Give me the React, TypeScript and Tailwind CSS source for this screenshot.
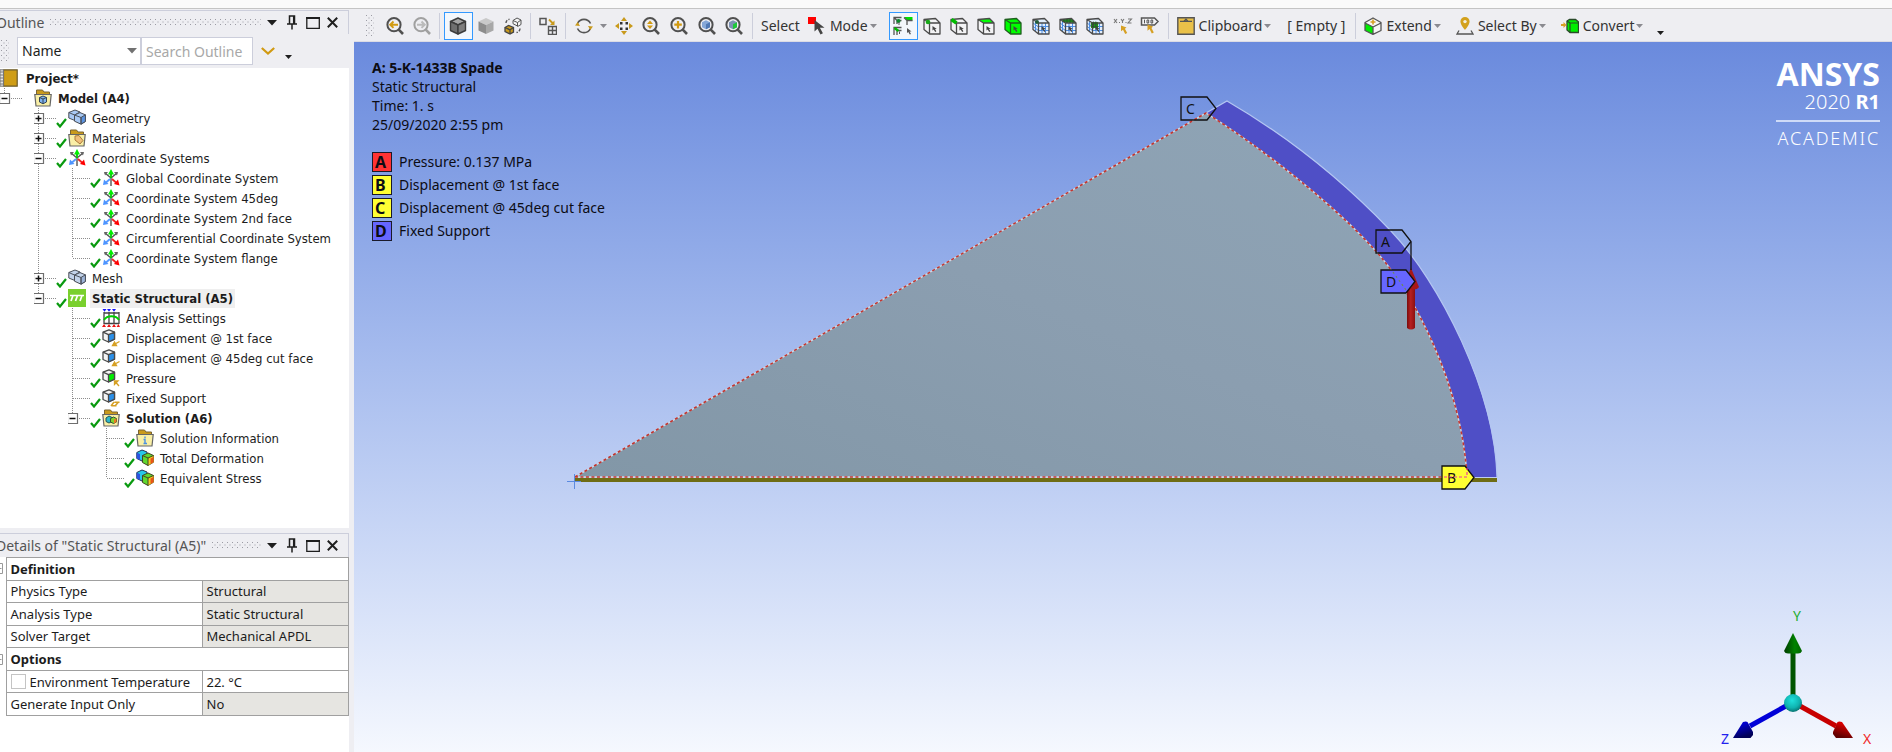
import { useState, type ReactNode } from 'react';

/* ---------- icons ---------- */

const Icon = ({ children, className = 'size-[18px]' }: { children: ReactNode; className?: string }) => (
  <svg viewBox="0 0 18 18" className={`shrink-0 ${className}`} fill="none" aria-hidden="true">
    {children}
  </svg>
);

const Magnifier = ({ color = '#505050', children }: { color?: string; children?: ReactNode }) => (
  <Icon>
    <circle cx="8" cy="7.7" r="6.6" stroke={color} strokeWidth="2" />
    <path d="M12.5 12.4 17 17" stroke={color} strokeWidth="2.6" />
    {children}
  </Icon>
);

const SolidCube = ({ top, left, right, edge }: { top: string; left: string; right: string; edge?: string }) => (
  <Icon>
    <g stroke={edge} strokeWidth="1.4" strokeLinejoin="round">
      <path d="M9 1 16.5 4.5 9 8 1.5 4.5Z" fill={top} />
      <path d="M1.5 4.5 9 8v9L1.5 13.5Z" fill={left} />
      <path d="M16.5 4.5 9 8v9l7.5-3.5Z" fill={right} />
    </g>
  </Icon>
);

const SwapCubes = () => (
  <Icon>
    <path d="M9 3.5 13 1l4 2v4.5l-3 1.8-5-2.6Z" fill="#f4f4f4" stroke="#555" />
    <path d="M9 3.5 13.5 5.5v3.8M13.5 5.5 17 3" stroke="#555" />
    <path d="M1 10.5 4.5 8.5 9.5 10.5v4.5L6 17 1 14.5Z" fill="#c99a1c" stroke="#444" strokeWidth="1.3" />
    <path d="M1 10.5 6 12.8V17M6 12.8l3.5-2.3" stroke="#444" strokeWidth="1.3" />
    <path d="M2 6C2 4 3.5 2.6 5.5 2.3M16 11.5c0 2.2-1.4 3.5-3.5 4" stroke="#555" strokeWidth="1.4" strokeDasharray="3 1.4" />
  </Icon>
);

const ViewportsIcon = () => (
  <Icon>
    <path d="M1 1.5h6v6H1Z" stroke="#555" strokeWidth="1.5" />
    <path d="M9.500 9.500h8v8h-8ZM13.500 9.500v8M9.500 13.500h8" stroke="#555" strokeWidth="1.4" />
    <path d="M10 2.5 14 6.5" stroke="#c99a1c" strokeWidth="1.8" />
    <path d="M15.5 3.5V8H11Z" fill="#c99a1c" />
  </Icon>
);

const RotateIcon = () => (
  <Icon>
    <path
      d="M2.5 6.5A7.2 7.2 0 0 1 15.5 6.5M15.5 11.5A7.2 7.2 0 0 1 2.5 11.5"
      stroke="#555"
      strokeWidth="1.6"
    />
    <path d="M0 8.5 2.7 5 5 9ZM18 9.5 15.3 13 13 9Z" fill="#c99a1c" />
  </Icon>
);

const PanIcon = () => (
  <Icon>
    <path d="M9 0l3 4H6ZM9 18l3-4H6ZM0 9l4-3v6ZM18 9l-4-3v6Z" fill="#c99a1c" />
    <path d="M5 5h2.500v2.500H5ZM10.500 5H13v2.500h-2.500ZM5 10.500h2.500V13H5ZM10.500 10.500H13V13h-2.500Z" fill="#333" />
  </Icon>
);

const MiniCube = ({ side, face }: { side: string; face: string }) => (
  <g strokeLinejoin="round">
    <path d="M8 3.3 12 5.300v5L8 12.300 4 10.300v-5Z" fill={side} />
    <path d="M8 7.300l4-2v5L8 12.300Z" fill={face} />
  </g>
);

const ModeIcon = () => (
  <Icon>
    <path d="M0 0h8v7H0Z" fill="#f00" />
    <path d="M6.5 3v11.5l3-2.7 3 5.7 2.4-1.3-3-5.4h4.6Z" fill="#444" />
  </Icon>
);

type PickKind = 'vertex' | 'edge' | 'face' | 'body' | 'node' | 'elementFace' | 'element';

const SelectCube = ({ kind }: { kind: PickKind }) => {
  const meshed = kind === 'node' || kind === 'elementFace' || kind === 'element';
  return (
    <Icon>
      <path
        d="M1 2.5 12.5 1.5 17 6v11H6.5L1 12.5Z"
        fill={kind === 'body' ? '#0f0' : meshed ? '#e3eefc' : '#f3f3f5'}
      />
      {kind === 'face' && <path d="M1 2.5 12.5 1.5 17 6H6.500Z" fill="#0f0" />}
      {meshed && (
        <path
          d="M10 6v11M13.5 6v11M6.5 9.5H17M6.5 13.5H17M3.5 4.5v9.5M1 6l5.5 4M1 9.5l5.5 4"
          stroke="#4d8fe6"
        />
      )}
      {kind === 'elementFace' && <path d="M2 2.5 12.5 1.5 16.5 5.8H6.500Z" fill="#17a817" />}
      {kind === 'element' && <path d="M5 5h7v6H5Z" fill="#17a817" />}
      <path
        d="M1 2.5 12.5 1.5 17 6v11H6.5L1 12.5ZM6.5 6v11M6.5 6H17M6.5 6 1 2.5"
        stroke={kind === 'body' ? '#1f5f1f' : '#4a4a4a'}
        strokeWidth="1.3"
        strokeLinejoin="round"
      />
      {kind === 'edge' && <path d="M1.500 2.500 6.500 6" stroke="#0b0" strokeWidth="3.6" />}
      {kind === 'vertex' && <circle cx="5" cy="5" r="2.3" fill="#17a817" />}
      {kind === 'node' && <circle cx="5" cy="5" r="2" fill="#245c3a" />}
      {kind === 'elementFace' && (
        <path d="M5 2.5v3M8 2v4M11 2v4M14 3.5v2.5M3 4h12" stroke="#2c4a2c" strokeWidth="0.8" />
      )}
      {kind === 'element' && (
        <path d="M7.3 4.5v7M9.8 4.5v7M4.5 7h8M4.5 9.3h8" stroke="#2c4a2c" strokeWidth="0.8" />
      )}
      <path d="M9.500 9v4.500l1.200-1 1.500 2.500 1.200-.7-1.400-2.400h1.800Z" fill="#444" />
    </Icon>
  );
};

const SmartSelectIcon = () => (
  <svg viewBox="0 0 20 20" className="size-5 shrink-0" fill="none" aria-hidden="true">
    <path d="M1 8V1.500h7.500M4 8V4.500h4.500M1 1.500l3 3" stroke="#555" strokeWidth="1.3" />
    <path d="M1 19v-7.500h7.500M4 19v-4.500h4.500" stroke="#555" strokeWidth="1.3" />
    <path d="M11 1h8.500v3.500H14Z" fill="#0d0" />
    <path d="M11 1.500l3 3V9M14 4.500h5.500" stroke="#555" strokeWidth="1.3" />
    <circle cx="5.500" cy="5" r="2" fill="#0a8a2a" />
    <path d="M1.500 12 5.500 15" stroke="#0b0" strokeWidth="2.400" />
    <path d="M6 6v3M6.500 15.500v2.500" stroke="#555" />
    <path d="M14 12v5l1.300-1 1.500 2.600 1.200-.7-1.400-2.400h2Z" fill="#555" />
  </svg>
);

const CoordPickIcon = () => (
  <svg viewBox="0 0 20 18" className="h-[18px] w-5 shrink-0" fill="none" aria-hidden="true">
    <path d="M1 2l3 4M4 2 1 6M8 2l1.500 2L11 2M9.500 4v2M15 2h3.500L15 6h3.500" stroke="#777" strokeWidth="1.1" />
    <path d="M6 5.500h1M12.500 5.500h1" stroke="#777" />
    <path d="M8 8.500l5.500 2-1.600 1.300 2.300 4.200-2 1-2.200-4.200L8 14.200Z" fill="#d6a024" />
  </svg>
);

const LabelPickIcon = () => (
  <svg viewBox="0 0 20 18" className="h-[18px] w-5 shrink-0" fill="none" aria-hidden="true">
    <path d="M1.500 1h13L18 4.500 14.500 8h-13Z" fill="#f3f3f5" stroke="#555" strokeWidth="1.5" />
    <path d="M4.500 2.700v3.600M7 3h1.700v3H7ZM11 3h1.700v3H11Z" stroke="#555" />
    <path d="M7.500 7.500l5.500 2-1.500 1.400 2.300 4.600-2 1-2.300-4.500-2 1.700Z" fill="#d6a024" />
  </svg>
);

const ClipboardIcon = () => (
  <Icon>
    <path d="M.8.8h16.400v16.400H.8Z" fill="#eac149" stroke="#555" strokeWidth="1.4" />
    <path d="M3 4.300h12M7 4.300 9 2.200l2 2.100Z" stroke="#555" strokeWidth="1.3" />
  </Icon>
);

const ExtendIcon = () => (
  <Icon>
    <path d="M9 1 17 5.500v8L9 17.400 1 13.500v-8Z" fill="#f6f6f6" />
    <path d="M1 6l8 4v7.400L1 13.500Z" fill="#0e0" />
    <path
      d="M9 17.400 1 13.500v-8L9 1l8 4.500v8ZM1 6l8 4 8-4M9 10v7.400"
      stroke="#555"
      strokeWidth="1.3"
      strokeLinejoin="round"
    />
    <path d="M9 2.500v5M6.500 5h5" stroke="#d6a024" strokeWidth="1.6" />
  </Icon>
);

const PinIcon = () => (
  <Icon>
    <path d="M9 0a4.600 4.600 0 0 0-4.600 4.600C4.400 8 9 13 9 13s4.600-5 4.600-8.400A4.600 4.600 0 0 0 9 0Z" fill="#d3a11c" />
    <circle cx="9" cy="4.6" r="1.7" fill="#f3efe0" />
    <path d="M3 13.500 1 17h16l-2-3.500" stroke="#555" strokeWidth="1.3" />
  </Icon>
);

const ConvertIcon = () => (
  <Icon>
    <path d="M6 4 8.500 2.500h6L17.500 5v10.500H9L6 13Z" fill="#0e0" stroke="#2a4a2a" strokeWidth="1.3" />
    <path d="M9 6v9.500M9 6h8.500M9 6 6 4" stroke="#2a4a2a" strokeWidth="1.2" />
    <path d="M0 8h3.500" stroke="#d6a024" strokeWidth="2" />
    <path d="M2.500 5 5.500 8l-3 3Z" fill="#d6a024" />
  </Icon>
);

const Caret = ({ className = 'text-[#8a8a90]' }: { className?: string }) => (
  <svg viewBox="0 0 7 4" className={`h-1 w-[7px] shrink-0 ${className}`} aria-hidden="true">
    <path d="M0 0h7L3.500 4Z" fill="currentColor" />
  </svg>
);

/* ---------- tree icons ---------- */

const Folder = ({ children }: { children?: ReactNode }) => (
  <Icon>
    <path d="M2.500 1h6l1.500 2h5.500v4H2.500Z" fill="#c99a1c" stroke="#7a6430" />
    <path d="M.8 5.500h16.400L16 17H2Z" fill="#f9efa6" stroke="#666" strokeWidth="1.2" />
    {children}
  </Icon>
);

const DoubleCube = ({ fill, dark }: { fill: string; dark: string }) => (
  <Icon>
    <g stroke="#4a4f58" strokeLinejoin="round">
      <path d="M.8 3.500 7 1l5 2v7l-4 2-7.200-3Z" fill={fill} />
      <path d="M.8 3.500 6.500 6v6M6.500 6 12 3" />
      <path d="M6.500 6 12 3.600l5.400 2.200v6.700l-4.400 2.700-6.500-3Z" fill={fill} />
      <path d="M13 8.500l4.400-2.700v6.700L13 15.200Z" fill={dark} />
      <path d="M6.500 6 13 8.500v6.700" />
    </g>
  </Icon>
);

const AxesIcon = () => (
  <Icon>
    <path d="M9 9 3 4M9 9l6-5M9 9v8" stroke="#555" strokeWidth="1.4" />
    <path d="M2 3h4L3 6.500ZM16 3h-4l3 3.500Z" fill="#666" />
    <path d="M9 0l3 5.500H6Z" fill="#0e0" />
    <path d="M9 5v4" stroke="#0c0" strokeWidth="1.8" />
    <path d="M8 10 4 13.500" stroke="#59f" strokeWidth="1.8" />
    <path d="M1 16l1-5.500L6.500 15Z" fill="#4d94ff" />
    <path d="M10 10l4 3.500" stroke="#e22" strokeWidth="1.8" />
    <path d="M17.500 16.500 12 15l4-4.500Z" fill="#f00" />
  </Icon>
);

const StaticIcon = () => (
  <Icon>
    <path d="M0 0h18v18H0Z" fill="#7ad02e" />
    <path d="M2 6.500h14M5 6.500 3 12M9.500 6.500l-2 5.500M14 6.500 12 12" stroke="#fff" strokeWidth="1.7" />
  </Icon>
);

const SettingsIcon = () => (
  <Icon>
    <path d="M2 3v12M7 3v12M12 3v12M17 3v12M2 4h15M2 14.500h15" stroke="#444" strokeWidth="1.3" />
    <path d="M2 11C5 6 14 6 17 11" stroke="#0c0" strokeWidth="2" />
    <path d="M.5 0h4L2.500 2.800ZM5 0h4L7 2.800ZM10 0h4l-2 2.800Z" fill="#11f" />
    <path d="M0 18l2-3 2 3ZM5 18l2-3 2 3ZM10 18l2-3 2 3ZM14.500 18l2-3 1.500 3Z" fill="#e11" />
  </Icon>
);

const LoadIcon = ({ face, kind }: { face: string; kind: 'displacement' | 'pressure' | 'fixed' }) => (
  <Icon>
    <g stroke="#4a4a4a" strokeWidth="1.3" strokeLinejoin="round">
      <path d="M1 3.200 7 .8l5.500 2.400v7L6.500 13 1 10.500Z" fill="#f4f4f4" />
      <path d="M6.500 5.700l6-2.500v7L6.500 13Z" fill={face} />
      <path d="M1 3.200 6.500 5.700" />
    </g>
    {kind === 'displacement' && (
      <path d="M17.500 12.500 13 15M10.500 16.500l2-3.500 2 3.500Z" stroke="#d6a024" strokeWidth="1.3" fill="#d6a024" />
    )}
    {kind === 'pressure' && (
      <path d="M17 17l-3.500-4M12.500 15.500V12H16Z" stroke="#d6a024" strokeWidth="1.3" fill="#d6a024" />
    )}
    {kind === 'fixed' && (
      <path d="M9 17l3-4M13 17l3.500-4M12.500 13.200h5M9.500 16.800h5" stroke="#d6a024" strokeWidth="1.5" />
    )}
  </Icon>
);

const ResultIcon = () => (
  <Icon>
    <g strokeLinejoin="round">
      <path d="M.8 3.500 6 1l5 2v8l-4 1.500-6.200-3Z" fill="#28c8e8" stroke="#235" />
      <path d="M.8 3.500 4 5v6L.8 9.500Z" fill="#2b55e0" />
      <path d="M6.500 6.500 12 4l5.500 2.500v6.700L12 16.500l-5.500-3Z" fill="#5fd82e" stroke="#442" />
      <path d="M12 9l5.500-2.500v6.700L12 16.500Z" fill="#f0d020" />
      <path d="M14.500 9.500l3-1.500v5.200L14.500 15Z" fill="#e8531c" />
      <path d="M6.500 6.500 12 9v7.500M12 9l5.500-2.500" stroke="#442" />
    </g>
  </Icon>
);

/* ---------- outline tree ---------- */

interface TreeNode {
  label: string;
  icon: ReactNode;
  bold?: boolean;
  checked?: boolean;
  selected?: boolean;
  open?: boolean;
  children?: TreeNode[];
}

const csys = (label: string): TreeNode => ({ label, icon: <AxesIcon />, checked: true });

const projectTree: TreeNode = {
  label: 'Model (A4)',
  bold: true,
  open: true,
  icon: (
    <Folder>
      <path d="M5.500 8.500 9 7l3.500 1.500v4.500L9 14.800 5.500 13Z" fill="#7fb2f0" stroke="#345" />
      <path d="M5.500 8.500 9 10v4.800M9 10l3.500-1.500" stroke="#345" />
    </Folder>
  ),
  children: [
    { label: 'Geometry', checked: true, icon: <DoubleCube fill="#a9c9f4" dark="#5b93e0" />, children: [] },
    {
      label: 'Materials',
      checked: true,
      children: [],
      icon: (
        <Folder>
          <path d="M7 7l4-.5 4 5-3 3.500-5-4Z" fill="#f0bf7a" stroke="#a87a3a" />
        </Folder>
      ),
    },
    {
      label: 'Coordinate Systems',
      checked: true,
      open: true,
      icon: <AxesIcon />,
      children: [
        csys('Global Coordinate System'),
        csys('Coordinate System 45deg'),
        csys('Coordinate System 2nd face'),
        csys('Circumferential Coordinate System'),
        csys('Coordinate System flange'),
      ],
    },
    { label: 'Mesh', checked: true, icon: <DoubleCube fill="#c3d3ea" dark="#9db4d8" />, children: [] },
    {
      label: 'Static Structural (A5)',
      bold: true,
      checked: true,
      selected: true,
      open: true,
      icon: <StaticIcon />,
      children: [
        { label: 'Analysis Settings', checked: true, icon: <SettingsIcon /> },
        { label: 'Displacement @ 1st face', checked: true, icon: <LoadIcon face="#2a8fe8" kind="displacement" /> },
        { label: 'Displacement @ 45deg cut face', checked: true, icon: <LoadIcon face="#2a8fe8" kind="displacement" /> },
        { label: 'Pressure', checked: true, icon: <LoadIcon face="#0e0" kind="pressure" /> },
        { label: 'Fixed Support', checked: true, icon: <LoadIcon face="#2a8fe8" kind="fixed" /> },
        {
          label: 'Solution (A6)',
          bold: true,
          checked: true,
          open: true,
          icon: (
            <Folder>
              <path d="M4 9l3-2 3 1.500v4L7 14l-3-1.500Z" fill="#2fb7c9" stroke="#255" />
              <path d="M8.500 9.500 11.500 8l3 1.500v3.500l-3 1.500-3-1.500Z" fill="#7fd22e" stroke="#353" />
              <path d="M12 10.500l2.500-1v3.500L12 14.500Z" fill="#ee7a22" />
            </Folder>
          ),
          children: [
            {
              label: 'Solution Information',
              checked: true,
              icon: (
                <Folder>
                  <path d="M9 7.500v1.800M7.500 10.500H9v4M7.500 14.500h3.500" stroke="#4a90e2" strokeWidth="1.4" />
                </Folder>
              ),
            },
            { label: 'Total Deformation', checked: true, icon: <ResultIcon /> },
            { label: 'Equivalent Stress', checked: true, icon: <ResultIcon /> },
          ],
        },
      ],
    },
  ],
};

const dotted = { stroke: '#8c8c8c', strokeWidth: 1, strokeDasharray: '1 1' };

const TreeItem = ({ node, guides, last }: { node: TreeNode; guides: boolean[]; last: boolean }) => {
  const [open, setOpen] = useState(!!node.open);
  const connector = (
    <svg viewBox="0 0 34 20" className="h-5 w-[34px]" fill="none" aria-hidden="true">
      <path d={last ? 'M4.500 0v10' : 'M4.500 0v20'} {...dotted} />
      <path d="M5 10.500h18" {...dotted} />
      {node.children && (
        <>
          <path d="M-.5 5.500h10v10h-10Z" fill="#fff" stroke="#6e6e6e" strokeWidth="1.2" />
          <path d={open ? 'M1.500 10.500h6' : 'M1.500 10.500h6M4.500 7.500v6'} stroke="#111" strokeWidth="1.5" />
        </>
      )}
      {node.checked && <path d="M23 15 26 18.500 32 11" stroke="#0a9a10" strokeWidth="2.2" />}
    </svg>
  );

  return (
    <li>
      <div className="flex h-5 items-center">
        {guides.map((line, i) => (
          <svg key={i} viewBox="0 0 34 20" className="h-5 w-[34px] shrink-0" aria-hidden="true">
            {line && <path d="M4.500 0v20" {...dotted} />}
          </svg>
        ))}
        {node.children ? (
          <button type="button" aria-label={`Toggle ${node.label}`} onClick={() => setOpen(!open)} className="shrink-0">
            {connector}
          </button>
        ) : (
          <span className="shrink-0">{connector}</span>
        )}
        {node.icon}
        <span
          className={`ml-1 whitespace-nowrap px-0.5 leading-[19px] ${node.bold ? 'font-bold' : ''} ${
            node.selected ? 'bg-[#efefef]' : ''
          }`}
        >
          {node.label}
        </span>
      </div>
      {node.children && open && (
        <ul>
          {node.children.map((child, i) => (
            <TreeItem
              key={child.label}
              node={child}
              guides={[...guides, !last]}
              last={i === node.children!.length - 1}
            />
          ))}
        </ul>
      )}
    </li>
  );
};

/* ---------- panels ---------- */

const DotFill = () => (
  <svg className="h-[7px] min-w-0 flex-1" aria-hidden="true">
    <defs>
      <pattern id="grip" width="5" height="5" patternUnits="userSpaceOnUse">
        <path d="M0 .5h1M2.500 3h1" stroke="#9c9ca4" strokeWidth="1.2" />
      </pattern>
    </defs>
    <rect width="100%" height="7" fill="url(#grip)" />
  </svg>
);

const Grip = () => (
  <svg className="h-[22px] w-2 shrink-0" aria-hidden="true">
    <rect width="8" height="22" fill="url(#grip)" />
  </svg>
);

const PanelTitle = ({ title }: { title: string }) => (
  <div className="flex h-6 items-center border-t border-r border-[#cccedb] bg-[#eeeef2] pr-2.5 text-sm text-[#555]">
    <h2 className="-ml-1 mr-1.5 whitespace-nowrap">{title}</h2>
    <DotFill />
    <button type="button" aria-label="Window position" className="ml-1.5 flex w-5 items-center">
      <svg viewBox="0 0 10 6" className="h-1.5 w-2.5" aria-hidden="true">
        <path d="M0 0h10L5 5.500Z" fill="#1e1e1e" />
      </svg>
    </button>
    <button type="button" aria-label="Auto hide" className="flex w-[19px] items-center">
      <svg viewBox="0 0 10 15" className="h-[15px] w-2.5" fill="none" aria-hidden="true">
        <path d="M2.500 8.500V1h5v7.500M0 9h10M5 9v5.500M6.700 1v8" stroke="#1e1e1e" strokeWidth="1.5" />
      </svg>
    </button>
    <button type="button" aria-label="Maximize" className="flex w-[21px] items-center">
      <svg viewBox="0 0 14 12" className="h-3 w-3.5" fill="none" aria-hidden="true">
        <path d="M.8.500h12.500v11H.8Z" stroke="#1e1e1e" strokeWidth="1.3" />
        <path d="M0 1h14" stroke="#1e1e1e" strokeWidth="2" />
      </svg>
    </button>
    <button type="button" aria-label="Close" className="flex items-center">
      <svg viewBox="0 0 11 11" className="size-[11px]" aria-hidden="true">
        <path d="M.8.800 10.200 10.200M10.200.8.800 10.200" stroke="#1e1e1e" strokeWidth="2" />
      </svg>
    </button>
  </div>
);

const OutlinePanel = () => (
  <section className="flex flex-1 flex-col">
    <PanelTitle title="Outline" />
    <div className="flex h-[34px] items-center bg-[#eeeef2] pl-px text-sm">
      <Grip />
      <div className="relative ml-2 w-[124px]">
        <select
          aria-label="Filter by"
          className="h-7 w-full appearance-none border border-[#cccedb] bg-white pl-1 text-[#1e1e1e]"
        >
          <option>Name</option>
        </select>
        <svg viewBox="0 0 10 6" className="pointer-events-none absolute top-[11px] right-1 h-1.5 w-2.5" aria-hidden="true">
          <path d="M0 0h10L5 5.500Z" fill="#717171" />
        </svg>
      </div>
      <input
        type="text"
        aria-label="Search Outline"
        placeholder="Search Outline"
        className="h-7 w-28 border border-[#cccedb] bg-white pl-1 placeholder:text-[#a8a8a8]"
      />
      <button type="button" aria-label="Expand filter" className="ml-2">
        <svg viewBox="0 0 14 8" className="h-2 w-3.5" fill="none" aria-hidden="true">
          <path d="M.8 1 7 6.500 13.200 1" stroke="#d19a12" strokeWidth="2.200" />
        </svg>
      </button>
      <button type="button" aria-label="Toolbar options" className="ml-2.5 pt-3">
        <Caret className="text-[#1e1e1e]" />
      </button>
    </div>
    <div className="flex-1 overflow-hidden bg-white font-['DejaVu_Sans_Condensed','DejaVu_Sans',sans-serif] text-[13px] text-[#1c1c1c]">
      <div className="flex h-5 items-center font-bold">
        <Icon>
          <path d="M3.500.8h13.700v16.400H3.500Z" fill="#cf9d16" stroke="#6b5a2a" strokeWidth="1.2" />
          <path d="M0 .8h3.500v16.400H0Z" fill="#e4e4e4" stroke="#777" />
          <path d="M0 3h3M0 6h3M0 9h3M0 12h3M0 15h3" stroke="#777" />
        </Icon>
        <span className="ml-2 leading-[19px]">Project*</span>
      </div>
      <ul>
        <TreeItem node={projectTree} guides={[]} last />
      </ul>
    </div>
  </section>
);

interface DetailRow {
  name: string;
  value?: string;
  editable?: boolean;
  checkbox?: boolean;
}

const details: DetailRow[] = [
  { name: 'Definition' },
  { name: 'Physics Type', value: 'Structural' },
  { name: 'Analysis Type', value: 'Static Structural' },
  { name: 'Solver Target', value: 'Mechanical APDL' },
  { name: 'Options' },
  { name: 'Environment Temperature', value: '22. °C', editable: true, checkbox: true },
  { name: 'Generate Input Only', value: 'No' },
];

const DetailsPanel = () => (
  <section className="mt-[5px]">
    <PanelTitle title={'Details of "Static Structural (A5)"'} />
    <div className="bg-white pb-9">
      <table className="h-[159px] w-full table-fixed border-collapse text-[13px] leading-4 text-[#1c1c1c]">
        <colgroup>
          <col className="w-[6px]" />
          <col className="w-[196px]" />
          <col />
        </colgroup>
        <tbody>
          {details.map((row) => (
            <tr key={row.name}>
              <td className="p-0">
                {!row.value && (
                  <svg viewBox="0 0 3 11" className="h-[11px] w-[3px]" fill="none" aria-hidden="true">
                    <path d="M0 .5h2.500v10H0M0 5.500h1.500" stroke="#999" />
                  </svg>
                )}
              </td>
              {row.value ? (
                <>
                  <th scope="row" className="whitespace-nowrap border border-[#a0a0a0] px-1 py-0 text-left font-normal">
                    {row.checkbox ? (
                      <label className="flex items-center gap-1">
                        <input type="checkbox" className="size-[15px] appearance-none border border-[#c4c4c4] bg-white" />
                        {row.name}
                      </label>
                    ) : (
                      row.name
                    )}
                  </th>
                  <td className={`border border-[#a0a0a0] px-1 py-0 ${row.editable ? 'bg-white' : 'bg-[#e6e5e1]'}`}>
                    {row.value}
                  </td>
                </>
              ) : (
                <th scope="rowgroup" colSpan={2} className="border border-[#a0a0a0] px-1 py-0 text-left font-bold">
                  {row.name}
                </th>
              )}
            </tr>
          ))}
        </tbody>
      </table>
    </div>
  </section>
);

/* ---------- toolbar ---------- */

const ToolButton = ({ label, active, children }: { label: string; active?: boolean; children: ReactNode }) => (
  <button
    type="button"
    aria-label={label}
    aria-pressed={active}
    className={`flex h-7 min-w-0 flex-1 items-center justify-center ${active ? 'border border-[#3399ff] bg-[#f3f7fc]' : ''}`}
  >
    {children}
  </button>
);

const Separator = () => <div className="mx-1 h-[26px] w-px shrink-0 bg-[#cccedb]" />;

const MenuButton = ({ icon, label }: { icon: ReactNode; label: string }) => (
  <button type="button" className="flex items-center whitespace-nowrap">
    {icon}
    <span className="mr-0.5 ml-1">{label}</span>
    <Caret />
  </button>
);

const Toolbar = () => (
  <div className="flex h-8 items-center overflow-hidden border-b border-[#dcdce4] bg-[#eeeef2] pl-3 text-sm text-[#333]">
    <Grip />
    <div className="ml-2 flex w-[53px]">
      <ToolButton label="Previous view">
        <Magnifier>
          <path d="M4 7.700h8M7.500 4.500 4.300 7.700l3.200 3.200" stroke="#d19a12" strokeWidth="2" />
        </Magnifier>
      </ToolButton>
      <ToolButton label="Next view">
        <Magnifier color="#a0a0a0">
          <path d="M4 7.700h8M8.500 4.500l3.200 3.200-3.200 3.200" stroke="#bbb" strokeWidth="2" />
        </Magnifier>
      </ToolButton>
    </div>
    <Separator />
    <div className="flex w-[82px]">
      <ToolButton label="Shaded with edges" active>
        <SolidCube top="#a5a5a5" left="#6f6f6f" right="#7d7d7d" edge="#3c3c3c" />
      </ToolButton>
      <ToolButton label="Shaded">
        <SolidCube top="#c9c9c9" left="#8c8c8c" right="#a8a8a8" />
      </ToolButton>
      <ToolButton label="Swap display">
        <SwapCubes />
      </ToolButton>
    </div>
    <Separator />
    <div className="flex w-[26px]">
      <ToolButton label="Viewports">
        <ViewportsIcon />
      </ToolButton>
    </div>
    <Separator />
    <div className="flex w-[27px]">
      <ToolButton label="Rotate">
        <RotateIcon />
      </ToolButton>
    </div>
    <div className="flex w-[13px] justify-center">
      <Caret />
    </div>
    <div className="flex w-[138px]">
      <ToolButton label="Pan">
        <PanIcon />
      </ToolButton>
      <ToolButton label="Zoom">
        <Magnifier>
          <path d="M8 3.500 11 7H5ZM8 12l3-3.500H5Z" fill="#d19a12" />
        </Magnifier>
      </ToolButton>
      <ToolButton label="Box zoom">
        <Magnifier>
          <path d="M8 4v7.500M4.300 7.700h7.500" stroke="#d19a12" strokeWidth="2.2" />
        </Magnifier>
      </ToolButton>
      <ToolButton label="Zoom to fit">
        <Magnifier>
          <MiniCube side="#86a8d8" face="#4f78b4" />
        </Magnifier>
      </ToolButton>
      <ToolButton label="Zoom to selection">
        <Magnifier>
          <MiniCube side="#7d92b4" face="#1fc83a" />
        </Magnifier>
      </ToolButton>
    </div>
    <Separator />
    <span className="mx-1">Select</span>
    <div className="mx-1">
      <MenuButton icon={<ModeIcon />} label="Mode" />
    </div>
    <div className="ml-2 flex w-[275px]">
      <ToolButton label="Smart select" active>
        <SmartSelectIcon />
      </ToolButton>
      <ToolButton label="Vertex">
        <SelectCube kind="vertex" />
      </ToolButton>
      <ToolButton label="Edge">
        <SelectCube kind="edge" />
      </ToolButton>
      <ToolButton label="Face">
        <SelectCube kind="face" />
      </ToolButton>
      <ToolButton label="Body">
        <SelectCube kind="body" />
      </ToolButton>
      <ToolButton label="Node">
        <SelectCube kind="node" />
      </ToolButton>
      <ToolButton label="Element face">
        <SelectCube kind="elementFace" />
      </ToolButton>
      <ToolButton label="Element">
        <SelectCube kind="element" />
      </ToolButton>
      <ToolButton label="Pick coordinates">
        <CoordPickIcon />
      </ToolButton>
      <ToolButton label="Label">
        <LabelPickIcon />
      </ToolButton>
    </div>
    <Separator />
    <div className="flex items-center gap-4 pr-1.5 pl-1">
      <MenuButton icon={<ClipboardIcon />} label="Clipboard" />
      <span className="whitespace-nowrap">[ Empty ]</span>
    </div>
    <Separator />
    <div className="flex items-center gap-[15px] px-1">
      <MenuButton icon={<ExtendIcon />} label="Extend" />
      <MenuButton icon={<PinIcon />} label="Select By" />
      <MenuButton icon={<ConvertIcon />} label="Convert" />
    </div>
    <button type="button" aria-label="More commands" className="ml-2.5 pt-3.5">
      <Caret className="text-[#1e1e1e]" />
    </button>
  </div>
);

/* ---------- graphics view ---------- */

const Tag = ({ x, y, letter, fill = 'none', body = 26 }: { x: number; y: number; letter: string; fill?: string; body?: number }) => (
  <g>
    <path
      d={`M${x} ${y}h${body}l9 11.500-9 11.500h-${body}Z`}
      fill={fill}
      stroke="#111"
      strokeWidth="1.3"
    />
    <text x={x + 5} y={y + 17} fontSize="14" fill="#111">
      {letter}
    </text>
  </g>
);

const innerEdge = 'C905 104 977 160 1019 206C1061 251 1108 345 1113 435';

const Model = () => (
  <svg
    viewBox="0 0 1538 710"
    preserveAspectRatio="xMidYMin meet"
    className="absolute inset-x-0 top-0 h-full w-full"
    fill="none"
    role="img"
    aria-label="Model view"
  >
    <defs>
      <linearGradient id="plate" x1="0" y1="1" x2="1" y2="0">
        <stop offset="0" stopColor="#8297a7" />
        <stop offset="0.5" stopColor="#8b9eb0" />
        <stop offset="1" stopColor="#8fa5b6" />
      </linearGradient>
      <linearGradient id="shaft" x1="0" x2="1">
        <stop offset="0" stopColor="#7a0c0c" />
        <stop offset="0.45" stopColor="#b62020" />
        <stop offset="1" stopColor="#8c1010" />
      </linearGradient>
    </defs>
    <path d={`M221 435 852 71${innerEdge}Z`} fill="url(#plate)" />
    <path
      d="M852 71 873 59C935 95 991 141 1036 188C1086 240 1141 350 1143 435H1113C1108 345 1061 251 1019 206C977 160 905 104 852 71Z"
      fill="#4f4fc6"
    />
    <path d="M852 71 873 59C935 95 991 141 1036 188C1086 240 1141 350 1143 435" stroke="#b4c6f2" strokeWidth="1.2" />
    <path d="M221 438H1143" stroke="#6e6c14" strokeWidth="4" />
    <path d={`M221 435 852 71${innerEdge}H221`} stroke="#cdd8e4" strokeWidth="1.4" />
    <path d={`M221 435 852 71${innerEdge}H221`} stroke="#c23630" strokeWidth="1.6" strokeDasharray="3 2.500" />
    <path d="M213 439.500h14M220.500 432v15" stroke="#5b8ae0" />
    <path d="M1053 240h8v46q-4 3-8 0Z" fill="url(#shaft)" />
    <path d="M1057 226 1065 245q-3 5-16 0Z" fill="#a81616" />
    <path d="M1057 200v28" stroke="#111" strokeWidth="1.3" />
    <Tag x={827} y={55} letter="C" />
    <Tag x={1022} y={188} letter="A" />
    <Tag x={1027} y={228} letter="D" fill="#6666ff" body={25} />
    <Tag x={1088} y={424} letter="B" fill="#ffff33" body={23} />
    <path d="M1090 435h23v-9" stroke="#f03ca0" strokeWidth="1.2" strokeDasharray="3 2" />
    <path d="M1039 230l13 18" stroke="#6a8a5a" strokeWidth="1.2" strokeDasharray="2 3" />
  </svg>
);

const Triad = () => (
  <svg viewBox="0 0 164 143" className="h-[143px] w-[164px]" role="img" aria-label="Axis triad" fontSize="14">
    <defs>
      <linearGradient id="green" x1="0" x2="1">
        <stop offset="0" stopColor="#003c00" />
        <stop offset="0.6" stopColor="#008200" />
        <stop offset="1" stopColor="#006400" />
      </linearGradient>
      <radialGradient id="origin" cx="0.45" cy="0.35" r="0.7">
        <stop offset="0" stopColor="#1fe0dc" />
        <stop offset="0.6" stopColor="#0fb3b0" />
        <stop offset="1" stopColor="#056664" />
      </radialGradient>
      <linearGradient id="blueCone" x1="0" y1="0" x2="0.4" y2="1">
        <stop offset="0.3" stopColor="#0000cc" />
        <stop offset="1" stopColor="#000055" />
      </linearGradient>
      <linearGradient id="redCone" x1="1" y1="0" x2="0.6" y2="1">
        <stop offset="0.3" stopColor="#d80000" />
        <stop offset="1" stopColor="#600000" />
      </linearGradient>
    </defs>
    <path d="M74.500 46h5v46h-5Z" fill="#005500" />
    <path d="M77 28 86 46q-1 2.500-4 2.500H72q-3 0-4-2.500Z" fill="url(#green)" />
    <path d="M70 101 34 121" stroke="#0000d8" strokeWidth="5" />
    <path d="M84 101l36 20" stroke="#c80000" strokeWidth="5" />
    <path d="M17 133 27 117q3-1 4.500 0L37 127v3l-2.500 3Z" fill="url(#blueCone)" />
    <path d="M137 133 126 117q-3-1-4.500 0L117 127v2l3 4Z" fill="url(#redCone)" />
    <circle cx="77" cy="98" r="9" fill="url(#origin)" />
    <text x="77" y="16" fill="#1fae2f">Y</text>
    <text x="5" y="139" fill="#2222ee">Z</text>
    <text x="147" y="139" fill="#f02a2a">X</text>
  </svg>
);

const legend = [
  { key: 'A', color: 'bg-[#ff3333]', text: 'Pressure: 0.137 MPa' },
  { key: 'B', color: 'bg-[#ffff33]', text: 'Displacement @ 1st face' },
  { key: 'C', color: 'bg-[#ffff33]', text: 'Displacement @ 45deg cut face' },
  { key: 'D', color: 'bg-[#6666ff]', text: 'Fixed Support' },
];

const GraphicsView = () => (
  <div className="relative flex flex-1 flex-col justify-between bg-linear-to-b from-[#6a8add] to-[#f5f8fe] text-sm leading-[19px] text-[#0c0c14]">
    <Model />
    <div className="relative flex items-start justify-between pt-4 pr-3 pl-[18px]">
      <div>
        <p className="font-bold">A: 5-K-1433B Spade</p>
        <p>Static Structural</p>
        <p>Time: 1. s</p>
        <p>25/09/2020 2:55 pm</p>
        <ul className="mt-[17px] flex flex-col gap-[2px]">
          {legend.map((item) => (
            <li key={item.key} className="flex h-[21px] items-center gap-[7px]">
              <span className={`flex h-5 w-5 items-center border border-[#1a1a2a] pl-0.5 text-base font-bold ${item.color}`}>
                {item.key}
              </span>
              {item.text}
            </li>
          ))}
        </ul>
      </div>
      <div className="flex flex-col items-end text-white">
        <span className="text-[32px] leading-8 font-bold">ANSYS</span>
        <span className="text-xl leading-6 font-light">
          2020 <b className="font-bold">R1</b>
        </span>
        <span className="mt-1.5 h-0.5 w-[104px] bg-[#cfdbf7]" />
        <span className="mt-1 text-lg leading-6 font-light tracking-widest">ACADEMIC</span>
      </div>
    </div>
    <div className="relative flex justify-end pr-3 pb-1">
      <Triad />
    </div>
  </div>
);

export default function App() {
  return (
    <div className="flex min-h-screen flex-col bg-[#eeeef2] font-['Noto_Sans','Liberation_Sans',sans-serif]">
      <div className="h-[9px] border-b border-[#c4c4c4] bg-[#fafafa]" />
      <div className="flex flex-1 pt-px">
        <aside className="mr-[5px] flex w-[349px] shrink-0 flex-col overflow-hidden">
          <OutlinePanel />
          <DetailsPanel />
        </aside>
        <main className="flex min-w-0 flex-1 flex-col">
          <Toolbar />
          <GraphicsView />
        </main>
      </div>
    </div>
  );
}
